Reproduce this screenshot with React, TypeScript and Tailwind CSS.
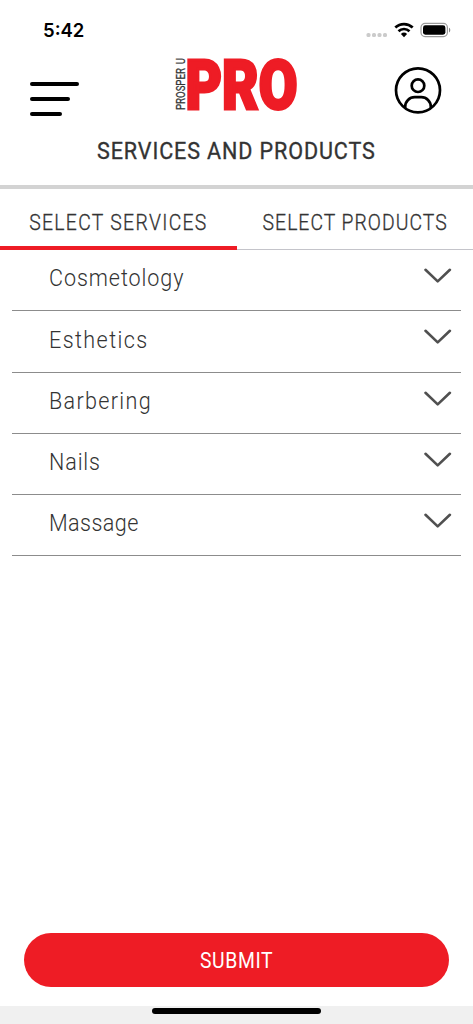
import React, { useState } from "react";

const services = [
  { name: "Cosmetology", tracking: "tracking-[1.05px]" },
  { name: "Esthetics", tracking: "tracking-[1.6px]" },
  { name: "Barbering", tracking: "tracking-[1.5px]" },
  { name: "Nails", tracking: "tracking-[1px]" },
  { name: "Massage", tracking: "tracking-[0.5px]" },
];

const products = [
  { name: "Hair Care", tracking: "tracking-[1px]" },
  { name: "Skin Care", tracking: "tracking-[1px]" },
  { name: "Nail Care", tracking: "tracking-[1px]" },
];

function StatusBar() {
  return (
    <div className="flex h-[50px] items-start justify-between pt-[18px] pr-[19px] pl-[43px]">
      <span className="font-['Inter',sans-serif] text-[18.5px] leading-6 font-semibold text-black">
        5:42
      </span>
      <svg className="mt-px" width="88" height="24" viewBox="0 0 88 24">
        <g fill="#cbcbcb">
          <rect x="0.5" y="14" width="4" height="4" rx="1.6" />
          <rect x="6" y="14" width="4" height="4" rx="1.6" />
          <rect x="11.5" y="14" width="4" height="4" rx="1.6" />
          <rect x="17" y="14" width="4" height="4" rx="1.6" />
        </g>
        <g fill="none" stroke="#000" strokeWidth="2.7">
          <path d="M29.3 8.6a12.6 12.6 0 0 1 17.4 0" />
          <path d="M32.5 12.2a8 8 0 0 1 11 0" />
        </g>
        <path d="M38 18.2l-3.1-3.2a4.5 4.5 0 0 1 6.2 0z" />
        <rect
          x="55"
          y="4.4"
          width="26.4"
          height="13.2"
          rx="4"
          fill="none"
          stroke="#9b9b9b"
          strokeWidth="1.2"
        />
        <rect x="57" y="6.3" width="22.4" height="9.4" rx="2.4" />
        <path d="M83 8.8v4.6c1.7-.7 1.7-3.9 0-4.6z" fill="#888" />
      </svg>
    </div>
  );
}

function Logo() {
  return (
    <svg
      className="overflow-visible"
      width="125"
      height="60"
      viewBox="0 0 125 60"
    >
      <text
        transform="translate(11 54) rotate(-90)"
        className="font-['Roboto',sans-serif] text-[13px] [word-spacing:2px]"
        fill="#333"
        stroke="#333"
        strokeWidth="0.25"
        textLength="52"
        lengthAdjust="spacingAndGlyphs"
      >
        PROSPER U
      </text>
      <text
        x="11.5"
        y="52.8"
        className="font-['Roboto',sans-serif] text-[69px] font-black"
        fill="#ee1c25"
        stroke="#ee1c25"
        strokeWidth="3"
        textLength="112"
        lengthAdjust="spacingAndGlyphs"
      >
        PRO
      </text>
    </svg>
  );
}

function Header() {
  return (
    <header className="h-[139px] border-b-4 border-[#d3d3d3]">
      <div className="flex h-[84px] items-start justify-between pr-[31px] pl-[30px]">
        <button className="flex flex-col gap-[11px] pt-8">
          <span className="h-1 w-[49px] rounded-full bg-black" />
          <span className="h-1 w-10 rounded-full bg-black" />
          <span className="h-1 w-8 rounded-full bg-black" />
        </button>
        <div className="pt-[6px]">
          <Logo />
        </div>
        <button className="pt-4">
          <svg
            width="48"
            height="48"
            viewBox="0 0 48 48"
            fill="none"
            stroke="#000"
            strokeWidth="2.7"
          >
            <circle cx="24" cy="24.3" r="22" />
            <circle cx="24" cy="19.7" r="6.3" />
            <path d="M11.2 42v-1.3a9.5 9.5 0 0 1 9.5-9.5h6.6a9.5 9.5 0 0 1 9.5 9.5V42" />
          </svg>
        </button>
      </div>
      <h1 className="text-center text-[24.5px] leading-[34px] font-normal whitespace-nowrap text-[#333] [-webkit-text-stroke:0.35px_#333]">
        <span className="inline-block scale-x-[0.88] tracking-[1px]">
          SERVICES AND PRODUCTS
        </span>
      </h1>
    </header>
  );
}

function Tab({
  label,
  tracking,
  active,
  onClick,
}: {
  label: string;
  tracking: string;
  active: boolean;
  onClick: () => void;
}) {
  return (
    <button
      onClick={onClick}
      className={
        active
          ? "flex w-1/2 items-start justify-center border-b-4 border-[#ee1c25] pt-[17px]"
          : "flex w-1/2 items-start justify-center border-b border-[#c4c4ca] pt-[17px]"
      }
    >
      <span
        className={`inline-block scale-x-[0.88] text-[22px] leading-[34px] font-light whitespace-nowrap [-webkit-text-stroke:0.3px_#333] ${tracking}`}
      >
        {label}
      </span>
    </button>
  );
}

function Row({ name, tracking }: { name: string; tracking: string }) {
  return (
    <li className="flex h-[61.3px] items-start justify-between border-b border-[#8c8c8c] pr-[9px] pl-[37px]">
      <span
        className={`inline-block origin-left scale-x-[0.88] pt-[11.3px] text-[24.5px] leading-[34px] font-light ${tracking}`}
      >
        {name}
      </span>
      <svg
        className="mt-[17px]"
        width="28"
        height="16"
        viewBox="0 0 28 16"
        fill="none"
        stroke="#505050"
        strokeWidth="2.6"
        strokeLinecap="round"
        strokeLinejoin="round"
      >
        <path d="M1.5 2.8L13.7 14.4L25.9 2.8" />
      </svg>
    </li>
  );
}

export default function App() {
  const [tab, setTab] = useState("services");
  const items = tab === "services" ? services : products;

  return (
    <div className="flex h-[1024px] w-[473px] flex-col overflow-hidden bg-white font-['Roboto',sans-serif] text-[#333]">
      <StatusBar />
      <Header />
      <div className="flex h-[61px]">
        <Tab
          label="SELECT SERVICES"
          tracking="tracking-[1.5px]"
          active={tab === "services"}
          onClick={() => setTab("services")}
        />
        <Tab
          label="SELECT PRODUCTS"
          tracking="tracking-[1.15px]"
          active={tab === "products"}
          onClick={() => setTab("products")}
        />
      </div>
      <ul className="flex-1 px-3">
        {items.map((item) => (
          <Row key={item.name} name={item.name} tracking={item.tracking} />
        ))}
      </ul>
      <div className="px-6 pb-[19px]">
        <button className="h-[54px] w-full rounded-full bg-[#ee1c25] text-[22px] text-white">
          <span className="inline-block scale-x-[0.88] tracking-[0.7px]">
            SUBMIT
          </span>
        </button>
      </div>
      <div className="flex h-[18px] justify-center bg-[#f0f0f0] pt-[2px]">
        <div className="h-[6px] w-[169px] rounded-full bg-black" />
      </div>
    </div>
  );
}
